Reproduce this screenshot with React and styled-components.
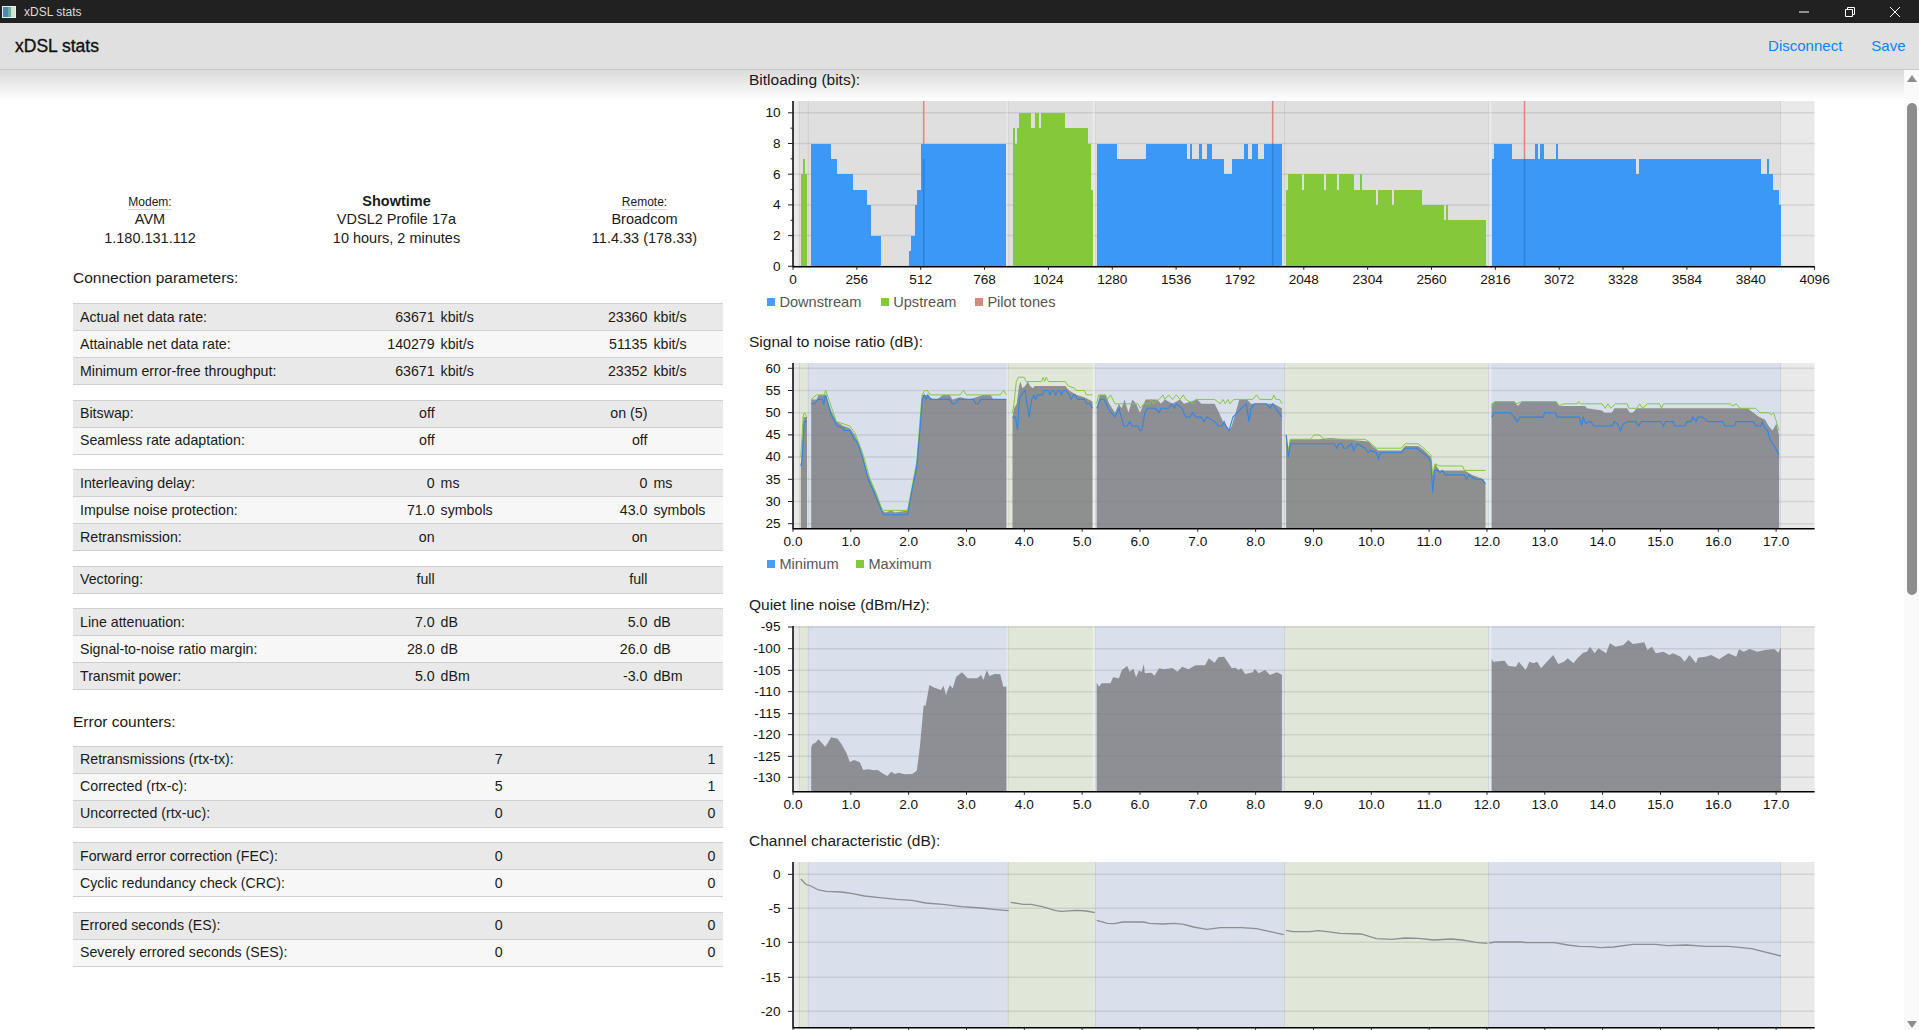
import React from "react";
import styled, { createGlobalStyle } from "styled-components";

const GlobalStyle = createGlobalStyle`
  html, body {
    margin: 0;
    padding: 0;
    height: 100%;
    overflow: hidden;
    background: #fff;
    font-family: "Liberation Sans", Arial, sans-serif;
    color: #1a1a1a;
  }
`;

const Page = styled.div`
  display: flex;
  flex-direction: column;
  height: 100vh;
`;
const TitleBar = styled.div`
  display: flex;
  align-items: center;
  flex: 0 0 23px;
  background: #212121;
  color: #dcdcdc;
  font-size: 12px;
  padding-right: 1px;
  position: relative;
  z-index: 3;
`;
const TitleIcon = styled.svg`
  margin-left: 2px;
  margin-right: 8px;
`;
const TitleText = styled.span`
  flex: 1;
`;
const WinButton = styled.div`
  width: 45.5px;
  height: 23px;
  display: flex;
  align-items: center;
  justify-content: center;
`;
const AppBar = styled.header`
  flex: 0 0 46px;
  display: flex;
  align-items: center;
  background: #e0e0e0;
  padding: 0 13.5px 0 15px;
  box-shadow: 0 1px 0 #c8c8c8;
  position: relative;
  z-index: 3;
`;
const AppTitle = styled.h1`
  flex: 1;
  margin: 0;
  font-size: 17.5px;
  font-weight: 400;
  -webkit-text-stroke: 0.35px #111;
  color: #111;
`;
const BarLink = styled.a`
  color: #0a84ff;
  font-size: 15px;
  margin-left: 29px;
  margin-bottom: 2px;
`;
const Main = styled.div`
  flex: 1;
  display: flex;
  min-height: 0;
`;
const Scroller = styled.div`
  flex: 1;
  display: flex;
  position: relative;
  overflow: hidden;
`;
const TopShadow = styled.div`
  position: absolute;
  top: 0;
  left: 0;
  right: 0;
  height: 32px;
  background: linear-gradient(rgba(0, 0, 0, 0.15), rgba(0, 0, 0, 0));
  pointer-events: none;
`;
const ScrollTrack = styled.div`
  flex: 0 0 15px;
  display: flex;
  flex-direction: column;
  align-items: center;
  background: #fafafa;
  padding: 6px 0 2px 1px;
  box-sizing: border-box;
`;
const ScrollArrow = styled.div`
  width: 0;
  height: 0;
  border-left: 5px solid transparent;
  border-right: 5px solid transparent;
  ${(p) =>
    p.$down
      ? "border-top: 7px solid #8d8d8d; margin-top: auto;"
      : "border-bottom: 7px solid #8d8d8d;"}
`;
const ScrollThumb = styled.div`
  width: 9.5px;
  height: 492px;
  margin-top: 21px;
  background: #8d8d8d;
  border-radius: 5px;
`;

const LeftPanel = styled.section`
  flex: 0 0 749px;
  box-sizing: border-box;
  padding: 123px 26px 0 73px;
`;
const LineInfo = styled.div`
  display: grid;
  grid-template-columns: 154px 1fr 157px;
  text-align: center;
  font-size: 14.5px;
  line-height: 19px;
  margin-bottom: 20.5px;
`;
const InfoLabel = styled.div`
  height: 17.5px;
  line-height: 21px;
  font-size: 12px;
`;
const InfoLabelText = styled.span`
  display: inline-block;
  height: 17px;
  border-bottom: 1px solid #d8d8d8;
`;
const InfoState = styled.div`
  height: 17.5px;
  line-height: 18px;
  font-weight: bold;
`;
const SectionTitle = styled.h2`
  margin: ${(p) => (p.$spaced ? "21.5px 0 14px" : "0 0 15px")};
  height: 20px;
  line-height: 20px;
  font-size: 15.5px;
  font-weight: 400;
`;
const Table = styled.div`
  border-top: 1px solid #cfcfcf;
  margin-bottom: 14.5px;
`;
const Row = styled.div`
  display: grid;
  grid-template-columns: 1fr 212.8px 212.8px;
  align-items: center;
  height: 27px;
  box-sizing: border-box;
  padding: 0 7.6px 1px 7px;
  border-bottom: 1px solid #cfcfcf;
  background: #f7f7f7;
  font-size: 14.2px;
  &:nth-child(odd) {
    background: #e9e9e9;
  }
`;
const Value = styled.div`
  display: flex;
  justify-content: flex-end;
`;
const Unit = styled.span`
  width: 62px;
  margin-left: 6px;
`;

const RightPanel = styled.section`
  flex: 1;
  min-width: 0;
`;
const ChartBlock = styled.div`
  margin-bottom: ${(p) => p.$after}px;
`;
const ChartTitle = styled.h3`
  margin: 0 0 12px;
  height: 20px;
  line-height: 21px;
  font-size: 15.5px;
  font-weight: 400;
`;
const ChartSvg = styled.svg`
  display: block;
  overflow: visible;
  text {
    font-family: "Liberation Sans", Arial, sans-serif;
    font-size: 13.6px;
    fill: #111;
  }
`;
const Legend = styled.div`
  display: flex;
  align-items: center;
  height: 20px;
  padding-left: 18px;
  font-size: 14.6px;
  color: #555;
`;
const LegendItem = styled.div`
  display: flex;
  align-items: center;
  width: ${(p) => p.$w}px;
`;
const Swatch = styled.i`
  width: 8px;
  height: 8px;
  margin-right: 4.4px;
  background: ${(p) => p.$color};
`;

// pixel helpers: the curves were read off at 2.613 px per x unit, 3 per y unit
const PLOT_LEFT = 44;
const PLOT_W = 1021.6;
const PLOT_H = 165.3;
const zx = (x) => x / 2.613 - 9;
const real = (x) => x - 749;
const shift = (arr) => arr.map(([x, y]) => [x + 1513, y]);

const BLUE = "#3b98f6";
const GREEN = "#83c93a";
const BLUE_BAND = "#d9e0ec";
const GREEN_BAND = "#e0e6d8";

const greyBands = [[793, 799.3], [799.3, 808.3], [808.3, 1008.3], [1008.3, 1095.5], [1095.5, 1284.6], [1284.6, 1488.5], [1488.5, 1780.5]];

const tones = Array.from({ length: 17 }, (_, i) => ({ x: PLOT_LEFT + (PLOT_W / 16) * i, label: String(i * 256) }));
const mhz = Array.from({ length: 18 }, (_, i) => ({ x: PLOT_LEFT + 57.83 * i, label: i.toFixed(1) }));

function Plot({ colored, grid, minor, xTicks, hideXLabels, children }) {
  const fills = colored
    ? ["#e9e9e9", GREEN_BAND, BLUE_BAND, GREEN_BAND, BLUE_BAND, GREEN_BAND, BLUE_BAND]
    : ["#e9e9e9", "#dfdfdf", "#dfdfdf", "#dfdfdf", "#dfdfdf", "#dfdfdf", "#dfdfdf"];
  return (
    <ChartSvg width="1100" height="191">
      <rect x={PLOT_LEFT} y="0" width={PLOT_W} height={PLOT_H} fill="#e9e9e9" />
      {greyBands.map(([a, b], i) => (
        <rect key={i} x={real(a)} y="0" width={b - a} height={PLOT_H} fill={fills[i]} />
      ))}
      {greyBands.slice(1).map(([a]) => (
        <line key={a} x1={real(a)} x2={real(a)} y1="0" y2={PLOT_H} stroke="rgba(0,0,0,0.08)" />
      ))}
      <line x1={real(1780.5)} x2={real(1780.5)} y1="0" y2={PLOT_H} stroke="rgba(0,0,0,0.08)" />
      {grid.map((g) => (
        <line key={g.label} x1={PLOT_LEFT} x2={PLOT_LEFT + PLOT_W} y1={g.y} y2={g.y} stroke="rgba(0,0,0,0.09)" strokeWidth="1.5" />
      ))}
      {children}
      <line x1={PLOT_LEFT} x2={PLOT_LEFT} y1="0" y2={PLOT_H + 1} stroke="#000" strokeWidth="1.5" />
      <line x1={PLOT_LEFT} x2={PLOT_LEFT + PLOT_W} y1={PLOT_H + 0.5} y2={PLOT_H + 0.5} stroke="#000" strokeWidth="1.6" />
      {grid.map((g) => (
        <g key={g.label}>
          <line x1={PLOT_LEFT - 5} x2={PLOT_LEFT} y1={g.y} y2={g.y} stroke="#222" />
          <text x="31.5" y={g.y + 4.3} textAnchor="end">{g.label}</text>
        </g>
      ))}
      {(minor || []).map((y) => (
        <line key={y} x1={PLOT_LEFT - 2.5} x2={PLOT_LEFT} y1={y} y2={y} stroke="#222" />
      ))}
      {xTicks.map((t) => (
        <g key={t.label}>
          <line x1={t.x} x2={t.x} y1={PLOT_H} y2={PLOT_H + 3.5} stroke="#222" />
          {!hideXLabels && <text x={t.x} y={PLOT_H + 17.5} textAnchor="middle">{t.label}</text>}
        </g>
      ))}
    </ChartSvg>
  );
}

/* ---------- bitloading ---------- */
const bitY = (h) => PLOT_H - h * 15.35;
const upBars = [
  [159, [[165, 6], [170, 7], [175, 6]]],
  [712, [[718, 9], [723, 8], [728, 9], [760, 10], [770, 9], [780, 10], [787, 9], [848, 10], [910, 9], [916, 8], [921, 5]]],
  [1427, [[1432, 5], [1468, 6], [1474, 5], [1526, 6], [1531, 5], [1559, 6], [1564, 5], [1604, 6], [1620, 5], [1625, 6], [1662, 5], [1667, 4], [1704, 5], [1709, 4], [1781, 5], [1839, 4], [1844, 3], [1849, 4], [1949, 3]]],
];
const downBars = [
  [186, [[238, 8], [253, 7], [295, 6], [332, 5], [342, 4], [368, 2]]],
  [441, [[447, 1], [457, 2], [463, 4], [472, 5], [696, 8]]],
  [932, [[984, 8], [1062, 7], [1167, 8], [1177, 7], [1182, 8], [1198, 7], [1208, 8], [1219, 7], [1233, 8], [1265, 7], [1286, 6], [1317, 7], [1328, 8], [1339, 7], [1354, 8], [1370, 7], [1416, 8]]],
  [1964, [[1969, 7], [2016, 8], [2078, 7], [2084, 8], [2090, 7], [2100, 8], [2131, 7], [2137, 8], [2340, 7], [2350, 6], [2668, 7], [2684, 6], [2689, 7], [2699, 6], [2715, 5], [2720, 4]]],
];
const pilots = [[923.7, 7], [1272.7, 8], [1524.5, 7]];

function barPath([start, steps]) {
  let d = `M${zx(start).toFixed(1)} ${PLOT_H}`;
  let x = start;
  steps.forEach(([end, h]) => {
    d += ` L${zx(x).toFixed(1)} ${bitY(h).toFixed(1)} L${zx(end).toFixed(1)} ${bitY(h).toFixed(1)}`;
    x = end;
  });
  return `${d} L${zx(x).toFixed(1)} ${PLOT_H} Z`;
}

// pale strip the plot leaves next to each block of carriers
function EdgeStrips() {
  return [[696, 701], [921, 929], [1956, 1964]].map(([a, b]) => (
    <rect key={a} x={zx(a)} y="0" width={(b - a) / 2.613} height={PLOT_H} fill="rgba(255,255,255,0.3)" />
  ));
}

/* ---------- snr ---------- */
const snrY = (db) => 5.3 + (60 - db) * 4.44;
const snrMean = [
  [[159, 38], [166, 49], [175, 49]],
  [[186, 53], [200, 53], [205, 54], [222, 54], [228, 53], [238, 50.5], [252, 48], [270, 47], [287, 46.5], [300, 45], [315, 42], [335, 36], [355, 32], [372, 28], [380, 27.5], [395, 28], [405, 27.5], [438, 28], [450, 33], [462, 39], [470, 47], [476, 54], [490, 54], [505, 53], [515, 53], [530, 54], [548, 54], [555, 53], [575, 53.5], [600, 53], [635, 54], [655, 54], [662, 53], [696, 53]],
  [[712, 49], [716, 51], [723, 52], [729, 56], [733, 57], [738, 55.5], [745, 56], [752, 57], [758, 56], [765, 55.5], [770, 56], [850, 56], [860, 55], [880, 54], [900, 53.5], [921, 52.5]],
  [[932, 51], [940, 54], [955, 54], [965, 52], [980, 50], [990, 52], [997, 51], [1005, 53], [1015, 50], [1025, 53], [1035, 52], [1045, 50], [1060, 53], [1090, 53], [1100, 52], [1110, 53], [1130, 52], [1150, 53], [1160, 52], [1195, 53], [1205, 52], [1240, 52], [1252, 50], [1262, 48], [1272, 47], [1278, 46], [1285, 47], [1295, 50], [1305, 53], [1325, 53], [1335, 52], [1395, 52], [1416, 51]],
  [[1427, 44], [1433, 42], [1438, 44], [1505, 44], ...shift([[0, 44], [30, 44.3], [130, 43.5], [140, 42.5], [155, 41.5], [215, 41.5], [225, 42.5], [260, 42.5], [275, 41.5], [292, 40], [296, 36], [303, 38.5], [315, 37], [380, 37], [400, 36], [430, 35], [435, 34]])],
  shift([[451, 52], [460, 52.5], [510, 52.5], [515, 52], [520, 51.5], [530, 52.5], [620, 52.5], [630, 51.5], [695, 51.5], [700, 51], [740, 50.5], [745, 50], [765, 50], [772, 51], [805, 51], [812, 50], [820, 50], [830, 51], [1100, 51], [1120, 51], [1135, 50], [1150, 49], [1165, 48.5], [1175, 47], [1185, 46], [1195, 47.5], [1202, 45]]),
];
const snrMax = [
  [[159, 40], [165, 49], [168, 50], [175, 49]],
  [[186, 53], [200, 54], [220, 54], [224, 55], [232, 53], [240, 51], [252, 48], [270, 47.5], [287, 47], [300, 45.5], [320, 41], [340, 35], [355, 32], [370, 28.5], [376, 28], [438, 28], [450, 33.5], [462, 39], [472, 50], [476, 54], [482, 55], [490, 55], [497, 54], [575, 54], [584, 55], [592, 54], [680, 54], [689, 55], [696, 54]],
  [[712, 50], [716, 52], [722, 57], [728, 58], [742, 58], [748, 57], [788, 57], [792, 58], [796, 57], [800, 58], [806, 57], [850, 57], [858, 56], [875, 55.5], [878, 55], [900, 55], [905, 54], [921, 54]],
  [[932, 52], [937, 54], [955, 54], [960, 53], [968, 54], [980, 52], [1040, 52], [1046, 51], [1055, 52], [1070, 52], [1075, 53], [1080, 52], [1095, 53], [1105, 54], [1110, 53], [1120, 54], [1130, 53], [1140, 54], [1150, 53], [1158, 54], [1165, 53], [1185, 52], [1190, 53], [1240, 53], [1255, 52], [1262, 53], [1268, 52], [1275, 53], [1280, 52], [1290, 53], [1340, 53], [1350, 54], [1358, 53], [1390, 53], [1395, 54], [1400, 53], [1410, 53], [1416, 52]],
  [[1427, 45], [1433, 41], [1438, 44], [1490, 44], [1500, 45], [1513, 45], ...shift([[15, 44], [120, 44], [130, 43.5], [150, 42], [215, 42], [225, 43], [260, 43], [280, 41.5], [292, 40.5], [297, 36], [303, 38.5], [315, 38], [375, 38], [380, 37], [435, 37]])],
  shift([[451, 51], [458, 52.5], [510, 52.5], [516, 52], [530, 52.5], [620, 52.5], [626, 51.5], [640, 52], [675, 52], [678, 52.5], [684, 52], [740, 52], [748, 51], [755, 52], [762, 51], [775, 52], [805, 52], [810, 51], [830, 51], [838, 52], [845, 51], [858, 52], [890, 52], [895, 51], [900, 52], [1075, 52], [1080, 51.5], [1090, 52], [1100, 51], [1140, 51], [1152, 50], [1175, 50], [1182, 49.5], [1188, 50], [1202, 46]]),
];
const snrMin = [
  [[159, 38], [162, 39], [168, 48], [175, 48]],
  [[186, 52], [194, 52], [204, 53], [215, 53], [219, 52], [224, 54], [238, 49.5], [254, 47], [270, 46.5], [272, 46], [288, 46], [298, 44], [306, 43.5], [320, 40], [335, 35], [355, 31], [375, 27], [438, 27], [448, 32], [462, 38], [470, 46], [476, 53], [481, 54], [487, 53], [491, 54], [497, 53], [548, 53], [555, 52], [562, 52], [570, 53], [610, 53], [616, 52], [622, 52], [630, 53], [696, 53]],
  [[712, 49], [720, 49], [725, 46], [730, 53], [735, 54], [745, 55], [750, 52], [756, 49], [762, 53], [768, 54], [772, 53], [778, 54], [790, 54], [795, 55], [805, 55], [810, 54], [815, 55], [820, 55], [825, 54], [830, 55], [835, 55], [840, 54], [845, 55], [852, 55], [860, 54], [865, 53], [872, 54], [876, 54], [882, 53], [900, 53], [905, 52], [915, 52], [921, 51]],
  [[932, 51], [942, 53], [952, 53], [962, 51], [970, 50], [980, 49], [990, 51], [1003, 47], [1012, 47], [1018, 48], [1025, 47], [1040, 47], [1045, 46], [1050, 46], [1058, 50], [1065, 51], [1085, 51], [1095, 50], [1100, 51], [1120, 51], [1128, 52], [1135, 51], [1140, 52], [1155, 51], [1165, 49], [1175, 49], [1182, 50], [1192, 49], [1205, 49], [1212, 48], [1220, 49], [1240, 48], [1250, 47], [1260, 47], [1265, 48], [1270, 47], [1278, 46], [1288, 49], [1300, 50], [1310, 51], [1323, 52], [1330, 48], [1335, 51], [1345, 52], [1375, 52], [1385, 51], [1392, 52], [1400, 51], [1416, 49]],
  [[1427, 45], [1433, 40], [1438, 43], [1510, 43], ...shift([[10, 43], [40, 43], [47, 42], [52, 43], [60, 43], [65, 42], [72, 42], [85, 43], [90, 41.5], [100, 43], [120, 42], [128, 41], [135, 41.5], [150, 41], [156, 39.5], [160, 41], [215, 41], [225, 42], [255, 42], [270, 41], [285, 40], [292, 39], [297, 32], [302, 37], [310, 37], [316, 36.5], [322, 37], [330, 36], [380, 36], [385, 35], [392, 36], [408, 35], [425, 35], [435, 34]])],
  shift([[451, 49], [458, 50], [500, 50], [510, 49], [518, 48], [525, 49], [585, 49], [590, 50], [618, 50], [622, 49], [680, 49], [686, 47], [690, 49], [697, 47.5], [703, 48], [710, 48], [718, 47], [765, 47], [772, 48], [780, 47.5], [788, 46], [795, 47.5], [805, 48], [828, 48], [835, 47], [842, 48], [892, 48], [900, 47], [905, 48], [925, 48], [930, 47], [955, 47], [962, 48], [972, 48], [977, 49], [985, 48], [990, 49], [1000, 49], [1010, 48.5], [1015, 48], [1055, 48], [1060, 47], [1085, 47], [1090, 48], [1135, 48], [1142, 47], [1155, 47], [1158, 48], [1165, 46.5], [1172, 46], [1178, 44], [1190, 42.5], [1202, 40.5]]),
];

/* ---------- quiet line noise ---------- */
const qlnY = (z) => z / 3 - 36;
const qln = [
  [[186, 472], [190, 462], [197, 458], [205, 448], [212, 456], [222, 470], [230, 458], [238, 442], [255, 446], [265, 462], [278, 488], [287, 516], [298, 510], [313, 517], [322, 540], [335, 538], [350, 541], [360, 540], [372, 550], [385, 558], [395, 545], [405, 552], [415, 548], [430, 553], [450, 552], [462, 542], [470, 470], [480, 345], [485, 348], [495, 285], [505, 292], [525, 300], [532, 287], [538, 315], [548, 285], [556, 295], [565, 260], [580, 247], [595, 265], [620, 265], [630, 255], [636, 270], [645, 240], [652, 258], [665, 252], [680, 253], [688, 290], [696, 290]],
  [[932, 278], [938, 290], [945, 280], [968, 280], [975, 262], [990, 265], [998, 240], [1012, 228], [1018, 245], [1028, 236], [1035, 262], [1042, 242], [1050, 245], [1055, 222], [1058, 250], [1075, 248], [1083, 257], [1095, 235], [1108, 238], [1130, 234], [1143, 245], [1155, 230], [1172, 238], [1190, 226], [1215, 226], [1225, 205], [1240, 218], [1250, 202], [1265, 200], [1285, 235], [1295, 233], [1302, 240], [1310, 235], [1320, 252], [1340, 247], [1345, 236], [1355, 250], [1372, 240], [1385, 255], [1403, 247], [1416, 254]],
  shift([[451, 206], [455, 215], [470, 214], [485, 212], [495, 228], [515, 230], [522, 215], [540, 240], [550, 215], [560, 220], [570, 215], [580, 235], [600, 210], [612, 195], [625, 222], [640, 215], [650, 205], [665, 220], [675, 205], [690, 188], [700, 185], [708, 170], [720, 190], [730, 175], [750, 190], [760, 160], [775, 170], [795, 165], [808, 150], [820, 162], [835, 160], [850, 157], [858, 180], [870, 170], [880, 190], [900, 185], [915, 195], [925, 190], [945, 200], [955, 215], [968, 195], [985, 220], [990, 203], [1010, 200], [1025, 195], [1045, 208], [1070, 190], [1090, 200], [1097, 178], [1110, 185], [1125, 177], [1145, 185], [1165, 180], [1190, 177], [1200, 188], [1207, 172]]),
];

/* ---------- channel characteristic ---------- */
const hlogY = (z) => z / 3 - 37;
const hlog = [
  [[159, 162], [172, 178], [185, 183], [205, 195], [225, 199], [265, 201], [295, 206], [325, 213], [365, 218], [410, 223], [450, 226], [485, 234], [530, 238], [580, 245], [630, 249], [670, 254], [702, 257]],
  [[707, 232], [740, 238], [760, 238], [790, 245], [825, 257], [840, 259], [880, 256], [905, 258], [927, 263]],
  [[932, 286], [960, 295], [978, 296], [1000, 291], [1055, 291], [1070, 295], [1105, 297], [1135, 295], [1160, 298], [1185, 306], [1220, 313], [1255, 308], [1310, 308], [1350, 311], [1385, 320], [1421, 329]],
  [[1427, 316], [1445, 320], [1490, 320], [1510, 317], [1535, 320], [1568, 325], ...shift([[110, 327], [150, 341], [190, 343], [225, 339], [260, 340], [300, 345], [345, 342], [375, 345], [410, 352], [440, 355]])],
  shift([[445, 354], [460, 351], [530, 351], [540, 353], [615, 353], [650, 360], [680, 364], [710, 365], [735, 368], [770, 366], [820, 358], [880, 358], [910, 362], [960, 360], [1010, 364], [1070, 364], [1130, 371], [1207, 393]]),
];

const points = (seg, fy) => seg.map(([x, y]) => `${zx(x).toFixed(1)},${fy(y).toFixed(1)}`).join(" ");
const areaPoints = (seg, fy) => `${zx(seg[0][0]).toFixed(1)},${PLOT_H} ${points(seg, fy)} ${zx(seg[seg.length - 1][0]).toFixed(1)},${PLOT_H}`;

const GREY = "rgba(121,123,126,0.8)";

const fiveSteps = (from, step, count, start, pitch) =>
  Array.from({ length: count }, (_, i) => ({ label: String(from + step * i), y: start + pitch * i }));

const bitGrid = [0, 2, 4, 6, 8, 10].map((b) => ({ label: String(b), y: bitY(b) }));
const bitMinor = [1, 3, 5, 7, 9].map(bitY);
const snrGrid = fiveSteps(60, -5, 8, 5.3, 22.2);
const qlnGrid = [-95, -100, -105, -110, -115, -120, -125, -130].map((v, i) => ({
  label: String(v),
  y: [111, 176, 241, 305, 371, 434, 499, 562].map(qlnY)[i],
}));
const hlogGrid = [
  { label: "0", y: hlogY(148) },
  { label: "-5", y: hlogY(250) },
  { label: "-10", y: hlogY(352) },
  { label: "-15", y: hlogY(457) },
  { label: "-20", y: hlogY(559) },
];

const connectionTables = [
  [
    ["Actual net data rate:", "63671", "23360", "kbit/s"],
    ["Attainable net data rate:", "140279", "51135", "kbit/s"],
    ["Minimum error-free throughput:", "63671", "23352", "kbit/s"],
  ],
  [
    ["Bitswap:", "off", "on (5)", ""],
    ["Seamless rate adaptation:", "off", "off", ""],
  ],
  [
    ["Interleaving delay:", "0", "0", "ms"],
    ["Impulse noise protection:", "71.0", "43.0", "symbols"],
    ["Retransmission:", "on", "on", ""],
  ],
  [["Vectoring:", "full", "full", ""]],
  [
    ["Line attenuation:", "7.0", "5.0", "dB"],
    ["Signal-to-noise ratio margin:", "28.0", "26.0", "dB"],
    ["Transmit power:", "5.0", "-3.0", "dBm"],
  ],
];
const errorTables = [
  [
    ["Retransmissions (rtx-tx):", "7", "1"],
    ["Corrected (rtx-c):", "5", "1"],
    ["Uncorrected (rtx-uc):", "0", "0"],
  ],
  [
    ["Forward error correction (FEC):", "0", "0"],
    ["Cyclic redundancy check (CRC):", "0", "0"],
  ],
  [
    ["Errored seconds (ES):", "0", "0"],
    ["Severely errored seconds (SES):", "0", "0"],
  ],
];

function StatTable({ rows, plain }) {
  return (
    <Table>
      {rows.map(([label, a, b, unit]) => (
        <Row key={label}>
          <span>{label}</span>
          <Value>
            {a}
            {!plain && <Unit>{unit}</Unit>}
          </Value>
          <Value>
            {b}
            {!plain && <Unit>{unit}</Unit>}
          </Value>
        </Row>
      ))}
    </Table>
  );
}

export default function App() {
  return (
    <Page>
      <GlobalStyle />
      <TitleBar>
        <TitleIcon width="14" height="12" viewBox="0 0 14 12">
          <rect width="14" height="12" fill="#e8eef0" />
          <rect x="1" y="1" width="5" height="10" fill="#3f8fb5" />
          <rect x="6" y="1" width="3" height="10" fill="#6fa8a0" />
          <rect x="9" y="1" width="4" height="10" fill="#cfe3d2" />
        </TitleIcon>
        <TitleText>xDSL stats</TitleText>
        <WinButton>
          <svg width="10" height="10" viewBox="0 0 10 10">
            <path d="M0 5h10" stroke="#fff" fill="none" />
          </svg>
        </WinButton>
        <WinButton>
          <svg width="10" height="10" viewBox="0 0 10 10">
            <path d="M.5 2.5h7v7h-7zM2.5 2.5v-2h7v7h-2" stroke="#fff" fill="none" />
          </svg>
        </WinButton>
        <WinButton>
          <svg width="10" height="10" viewBox="0 0 10 10">
            <path d="M0 0l10 10M10 0L0 10" stroke="#fff" fill="none" />
          </svg>
        </WinButton>
      </TitleBar>
      <AppBar>
        <AppTitle>xDSL stats</AppTitle>
        <BarLink>Disconnect</BarLink>
        <BarLink>Save</BarLink>
      </AppBar>
      <Main>
        <Scroller>
          <LeftPanel>
            <LineInfo>
              <div>
                <InfoLabel><InfoLabelText>Modem:</InfoLabelText></InfoLabel>
                <div>AVM</div>
                <div>1.180.131.112</div>
              </div>
              <div>
                <InfoState>Showtime</InfoState>
                <div>VDSL2 Profile 17a</div>
                <div>10 hours, 2 minutes</div>
              </div>
              <div>
                <InfoLabel><InfoLabelText>Remote:</InfoLabelText></InfoLabel>
                <div>Broadcom</div>
                <div>11.4.33 (178.33)</div>
              </div>
            </LineInfo>
            <SectionTitle>Connection parameters:</SectionTitle>
            {connectionTables.map((rows) => (
              <StatTable key={rows[0][0]} rows={rows} />
            ))}
            <SectionTitle $spaced>Error counters:</SectionTitle>
            {errorTables.map((rows) => (
              <StatTable key={rows[0][0]} rows={rows} plain />
            ))}
          </LeftPanel>
          <RightPanel>
            <ChartBlock $after={19}>
              <ChartTitle>Bitloading (bits):</ChartTitle>
              <Plot grid={bitGrid} minor={bitMinor} xTicks={tones}>
                <EdgeStrips />
                {pilots.map(([x, h]) => (
                  <line key={x} x1={real(x)} x2={real(x)} y1="0" y2={bitY(h)} stroke="#dc8a80" strokeWidth="1.6" />
                ))}
                {upBars.map((b) => (
                  <path key={b[0]} d={barPath(b)} fill={GREEN} shapeRendering="crispEdges" />
                ))}
                {downBars.map((b) => (
                  <path key={b[0]} d={barPath(b)} fill={BLUE} shapeRendering="crispEdges" />
                ))}
                {pilots.map(([x, h]) => (
                  <line key={x} x1={real(x)} x2={real(x)} y1={bitY(h)} y2={PLOT_H} stroke="#2f80dc" strokeWidth="1.6" />
                ))}
              </Plot>
              <Legend>
                <LegendItem $w={113.8}><Swatch $color="#459ffa" />Downstream</LegendItem>
                <LegendItem $w={94.2}><Swatch $color={GREEN} />Upstream</LegendItem>
                <LegendItem $w={120}><Swatch $color="#d9867c" />Pilot tones</LegendItem>
              </Legend>
            </ChartBlock>
            <ChartBlock $after={20}>
              <ChartTitle>Signal to noise ratio (dB):</ChartTitle>
              <Plot colored grid={snrGrid} xTicks={mhz}>
                <EdgeStrips />
                {snrMean.map((seg) => (
                  <polygon key={seg[0][0]} points={areaPoints(seg, snrY)} fill={GREY} />
                ))}
                {snrMax.map((seg) => (
                  <polyline key={seg[0][0]} points={points(seg, snrY)} fill="none" stroke="#83c93a" strokeWidth="1" />
                ))}
                {snrMin.map((seg) => (
                  <polyline key={seg[0][0]} points={points(seg, snrY)} fill="none" stroke="#2f86e6" strokeWidth="1.1" />
                ))}
              </Plot>
              <Legend>
                <LegendItem $w={89}><Swatch $color="#459ffa" />Minimum</LegendItem>
                <LegendItem $w={120}><Swatch $color={GREEN} />Maximum</LegendItem>
              </Legend>
            </ChartBlock>
            <ChartBlock $after={13}>
              <ChartTitle>Quiet line noise (dBm/Hz):</ChartTitle>
              <Plot colored grid={qlnGrid} xTicks={mhz}>
                <EdgeStrips />
                {qln.map((seg) => (
                  <polygon key={seg[0][0]} points={areaPoints(seg, qlnY)} fill={GREY} />
                ))}
              </Plot>
            </ChartBlock>
            <ChartBlock $after={0}>
              <ChartTitle>Channel characteristic (dB):</ChartTitle>
              <Plot colored grid={hlogGrid} xTicks={mhz} hideXLabels>
                {hlog.map((seg) => (
                  <polyline key={seg[0][0]} points={points(seg, hlogY)} fill="none" stroke="#8b8e92" strokeWidth="1.3" />
                ))}
              </Plot>
            </ChartBlock>
          </RightPanel>
          <TopShadow />
        </Scroller>
        <ScrollTrack>
          <ScrollArrow />
          <ScrollThumb />
          <ScrollArrow $down />
        </ScrollTrack>
      </Main>
    </Page>
  );
}
